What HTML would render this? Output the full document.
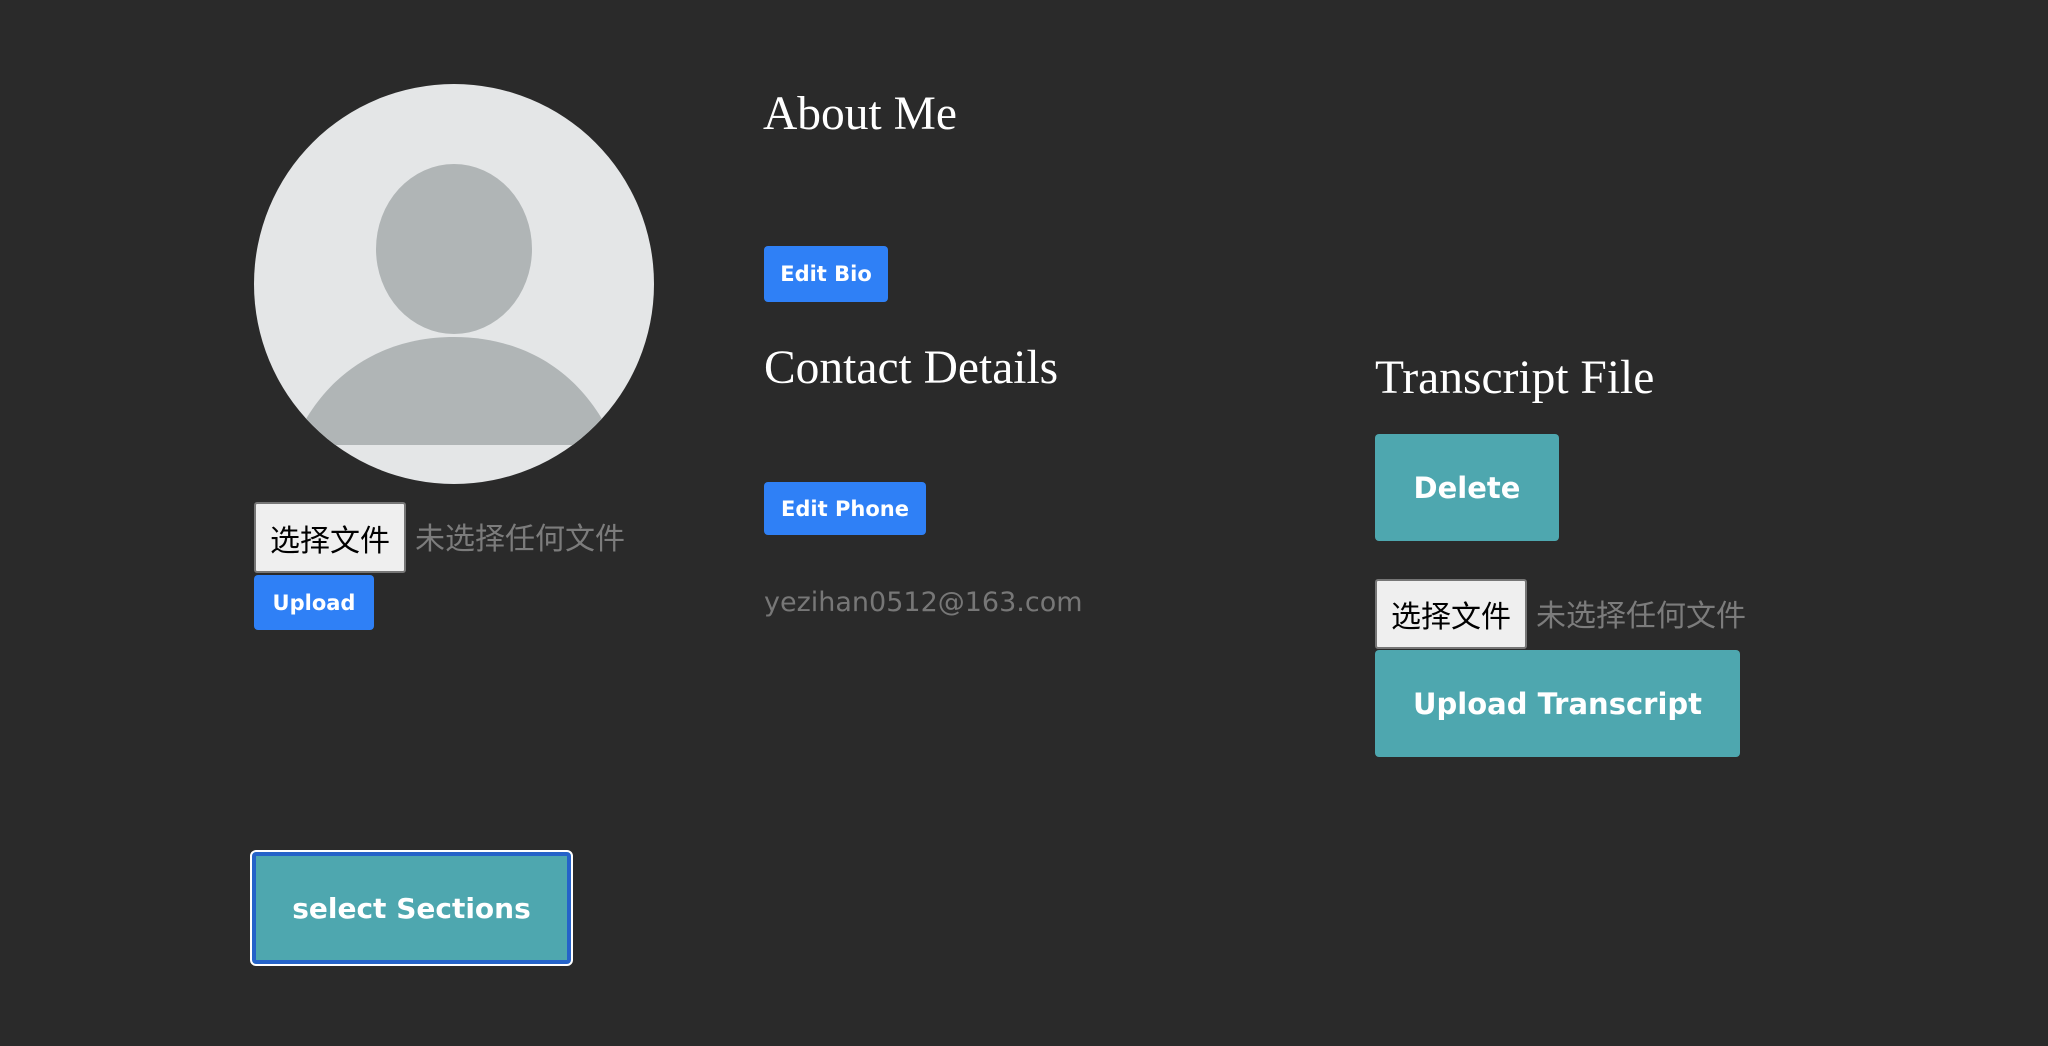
<!DOCTYPE html>
<html><head><meta charset="utf-8"><style>
html,body{margin:0;padding:0;background:#2a2a2a;width:2048px;height:1046px;overflow:hidden;position:relative}
.a{position:absolute;white-space:nowrap}
.serif{font-family:"Liberation Serif",serif;color:#fff;font-size:47.5px;line-height:1}
.btn{position:absolute;color:#fff;font-family:"DejaVu Sans","Liberation Sans",sans-serif;font-weight:bold;display:flex;align-items:center;justify-content:center;border-radius:4px;box-sizing:border-box}
.blue{background:#2f80f6;font-size:21px}
.teal{background:#4ea7af;font-size:29px}
.file{position:absolute;background:#efefef;border:2px solid #767676;border-radius:3px;box-sizing:border-box;font-family:"Noto Sans CJK SC",sans-serif;font-size:30px;color:#000;display:flex;align-items:center;justify-content:center}
.nf{font-family:"Noto Sans CJK SC",sans-serif;font-size:30px;color:#7c7c7c}
</style></head><body>
<svg class="a" style="left:253px;top:83px" width="402" height="402" viewBox="0 0 402 402">
<defs><clipPath id="c"><circle cx="201" cy="201" r="200"/></clipPath></defs>
<circle cx="201" cy="201" r="200" fill="#e4e6e7"/>
<g clip-path="url(#c)">
<ellipse cx="201" cy="166" rx="78" ry="85" fill="#b0b5b6"/>
<path d="M40 362 C70 290 130 254 201 254 C272 254 332 290 362 362 Z" fill="#b0b5b6"/>
</g>
</svg>
<div class="file" style="left:254px;top:502px;width:152px;height:71px">选择文件</div>
<div class="a nf" style="left:415px;top:514px">未选择任何文件</div>
<div class="btn blue" style="left:254px;top:575px;width:120px;height:55px">Upload</div>

<div class="a serif" style="left:763px;top:91px">About Me</div>
<div class="btn blue" style="left:764px;top:246px;width:124px;height:56px">Edit Bio</div>
<div class="a serif" style="left:764px;top:345px">Contact Details</div>
<div class="btn blue" style="left:764px;top:482px;width:162px;height:53px">Edit Phone</div>
<div class="a" style="left:764px;top:587px;font-family:'DejaVu Sans','Liberation Sans',sans-serif;font-size:27px;color:#777">yezihan0512@163.com</div>

<div class="a serif" style="left:1375px;top:355px">Transcript File</div>
<div class="btn teal" style="left:1375px;top:434px;width:184px;height:107px">Delete</div>
<div class="file" style="left:1375px;top:579px;width:152px;height:70px">选择文件</div>
<div class="a nf" style="left:1536px;top:591px">未选择任何文件</div>
<div class="btn teal" style="left:1375px;top:650px;width:365px;height:107px">Upload Transcript</div>

<div class="btn teal" style="left:250px;top:850px;width:323px;height:116px;border:2px solid #fff;border-radius:6px;box-shadow:inset 0 0 0 4px #2563c9;font-size:28px">select Sections</div>
</body></html>
